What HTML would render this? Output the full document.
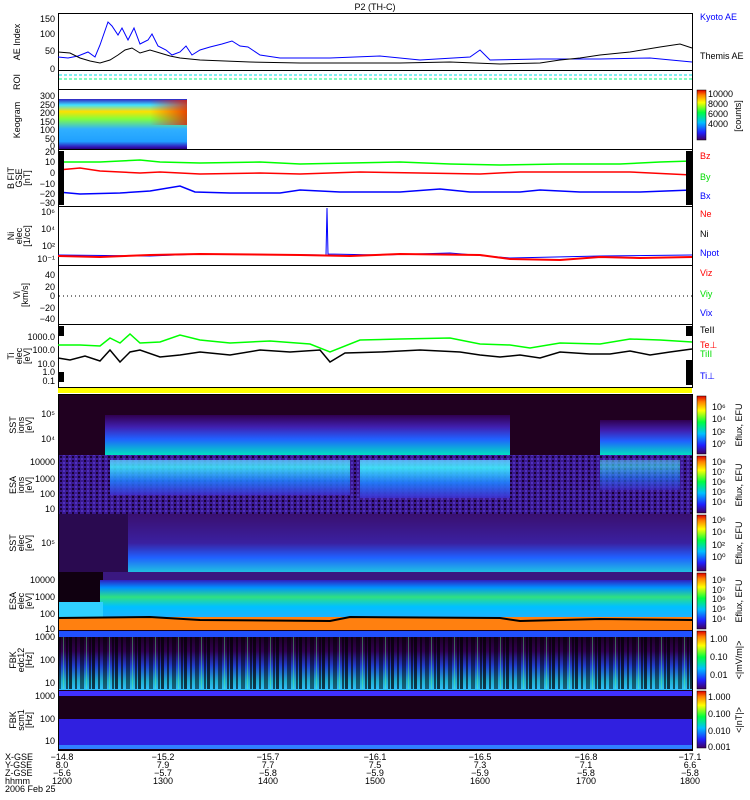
<!DOCTYPE html><html><head><style>body{margin:0;background:#fff}svg{display:block}text{font-family:"Liberation Sans",sans-serif;font-size:9px}</style></head><body>
<svg width="750" height="800" viewBox="0 0 750 800" xmlns="http://www.w3.org/2000/svg">
<defs>
<linearGradient id="cb" x1="0" y1="1" x2="0" y2="0"><stop offset="0" stop-color="#400060"/><stop offset=".15" stop-color="#2020ff"/><stop offset=".35" stop-color="#00c0ff"/><stop offset=".55" stop-color="#00ff40"/><stop offset=".75" stop-color="#ffff00"/><stop offset=".9" stop-color="#ff8000"/><stop offset="1" stop-color="#e00000"/></linearGradient>
<linearGradient id="keo" x1="0" y1="0" x2="0" y2="1"><stop offset="0" stop-color="#3020c0"/><stop offset=".12" stop-color="#40e0ff"/><stop offset=".25" stop-color="#ffe000"/><stop offset=".4" stop-color="#80ff40"/><stop offset=".6" stop-color="#30b0ff"/><stop offset=".85" stop-color="#20a0ff"/><stop offset=".95" stop-color="#3020c0"/><stop offset="1" stop-color="#2a0080"/></linearGradient>
<linearGradient id="keor" x1="0" y1="0" x2="1" y2="0"><stop offset="0" stop-color="#ff3000" stop-opacity="0"/><stop offset="1" stop-color="#e02000" stop-opacity=".8"/></linearGradient>
<linearGradient id="ssti" x1="0" y1="0" x2="0" y2="1"><stop offset="0" stop-color="#300050"/><stop offset=".3" stop-color="#4020b0"/><stop offset=".6" stop-color="#2060ff"/><stop offset="1" stop-color="#00e0c0"/></linearGradient>
<linearGradient id="esai" x1="0" y1="0" x2="0" y2="1"><stop offset="0" stop-color="#60c0ff"/><stop offset=".2" stop-color="#40f0ff"/><stop offset=".6" stop-color="#2080ff"/><stop offset="1" stop-color="#4030d0"/></linearGradient>
<linearGradient id="esae" x1="0" y1="0" x2="0" y2="1"><stop offset="0" stop-color="#3020c0"/><stop offset=".2" stop-color="#0090ff"/><stop offset=".45" stop-color="#30e080"/><stop offset=".7" stop-color="#00c0ff"/><stop offset="1" stop-color="#20b0ff"/></linearGradient>
<linearGradient id="ssteb" x1="0" y1="0" x2="0" y2="1"><stop offset="0" stop-color="#3a1070"/><stop offset=".5" stop-color="#3a20a0"/><stop offset=".75" stop-color="#2060ff"/><stop offset="1" stop-color="#20c0e0"/></linearGradient>
<linearGradient id="fbkg" x1="0" y1="0" x2="0" y2="1"><stop offset="0" stop-color="#150015"/><stop offset=".35" stop-color="#300050"/><stop offset=".6" stop-color="#2040d0"/><stop offset=".85" stop-color="#20b0d0"/><stop offset="1" stop-color="#30c0ff"/></linearGradient>
<pattern id="noise" width="6" height="4" patternUnits="userSpaceOnUse"><rect width="6" height="4" fill="#3a1a90"/><rect x="0" y="0" width="2" height="2" fill="#1a0030"/><rect x="3" y="2" width="2" height="2" fill="#5030c0"/></pattern>
<pattern id="fbk" width="23" height="52" patternUnits="userSpaceOnUse"><rect x="0" width="3" height="52" fill="#000" opacity=".7"/><rect x="6" width="2" height="52" fill="#000" opacity=".6"/><rect x="11" width="4" height="52" fill="#000" opacity=".5"/><rect x="17" width="1" height="52" fill="#60ff80" opacity=".4"/><rect x="20" width="2" height="52" fill="#000" opacity=".6"/></pattern>
</defs>
<text x="375" y="10" text-anchor="middle">P2 (TH-C)</text>
<rect x="58" y="395" width="634" height="60" fill="#200020"/>
<rect x="105" y="415" width="405" height="40" fill="url(#ssti)"/>
<rect x="600" y="420" width="92" height="35" fill="url(#ssti)"/>
<rect x="58" y="455" width="634" height="59" fill="url(#noise)"/>
<rect x="110" y="460" width="240" height="35" fill="url(#esai)" opacity=".85"/>
<rect x="360" y="460" width="150" height="38" fill="url(#esai)" opacity=".9"/>
<rect x="600" y="460" width="80" height="30" fill="url(#esai)" opacity=".6"/>
<rect x="58" y="514" width="634" height="58" fill="url(#ssteb)"/>
<rect x="58" y="514" width="70" height="58" fill="#2a0a50"/>
<rect x="58" y="572" width="634" height="58" fill="#3a1880"/>
<rect x="58" y="572" width="45" height="30" fill="#100010"/>
<rect x="100" y="580" width="592" height="38" fill="url(#esae)"/>
<rect x="58" y="602" width="45" height="16" fill="#30d0ff"/>
<rect x="58" y="617" width="634" height="13" fill="#ff8010"/>
<polyline points="58,618 150,617 200,620 330,621 350,617 500,618 520,621 600,619 692,620" fill="none" stroke="#000" stroke-width="2"/>
<rect x="58" y="630" width="634" height="60" fill="url(#fbkg)"/>
<rect x="58" y="637" width="634" height="52" fill="url(#fbk)"/>
<rect x="58" y="631" width="634" height="6" fill="#2050ff"/>
<rect x="58" y="690" width="634" height="60" fill="#1a0018"/>
<rect x="58" y="691" width="634" height="5" fill="#4030ff"/>
<rect x="58" y="719" width="634" height="30" fill="#3020e0"/>
<rect x="58" y="745" width="634" height="4" fill="#3080ff"/>
<rect x="58" y="99" width="129" height="50" fill="url(#keo)"/>
<rect x="150" y="100" width="37" height="25" fill="url(#keor)"/>
<rect x="58" y="388" width="634" height="5" fill="#ffff00"/>
<g fill="none" stroke="#000" stroke-width="1">
<rect x="58.5" y="13.5" width="634" height="57"/>
<rect x="58.5" y="70.5" width="634" height="19"/>
<rect x="58.5" y="89.5" width="634" height="60"/>
<rect x="58.5" y="149.5" width="634" height="57"/>
<rect x="58.5" y="206.5" width="634" height="59"/>
<rect x="58.5" y="265.5" width="634" height="59"/>
<rect x="58.5" y="324.5" width="634" height="63"/>
<rect x="58.5" y="394.5" width="634" height="356"/>
</g>
<line x1="59" y1="75" x2="692" y2="75" stroke="#00e0e0" stroke-dasharray="3,2"/>
<line x1="59" y1="79" x2="692" y2="79" stroke="#00ff80" stroke-dasharray="3,2"/>
<polyline fill="none" stroke="#0000ff" points="58,57 68,58 78,56 88,52 95,57 100,45 108,22 112,26 118,35 122,28 128,40 134,28 140,44 148,40 152,34 158,46 166,50 172,55 180,52 186,46 192,55 200,50 210,47 222,44 232,41 240,46 248,47 260,55 280,58 330,58 380,56 420,60 470,57 480,50 490,60 540,59 600,59 650,58 692,62"/>
<polyline fill="none" stroke="#000" points="58,52 70,53 80,58 90,61 100,63 110,60 118,55 125,50 132,48 140,53 150,50 160,53 170,56 180,58 200,60 250,62 300,63 350,63 400,63 450,62 500,64 540,63 560,60 580,58 600,55 630,52 660,47 680,44 692,48"/>
<polyline fill="none" stroke="#00ff00" stroke-width="1.5" points="58,162 100,162 140,160 160,162 200,163 260,162 300,164 350,163 400,162 450,164 500,165 560,164 620,164 660,162 692,161"/>
<polyline fill="none" stroke="#ff0000" stroke-width="1.5" points="58,170 80,168 100,171 140,173 160,172 200,174 260,173 300,174 360,172 420,173 480,174 520,172 580,172 630,172 692,175"/>
<polyline fill="none" stroke="#0000ff" stroke-width="1.5" points="58,192 80,194 120,193 150,191 180,186 195,192 230,193 280,193 300,190 340,192 400,192 440,189 470,192 520,192 540,190 580,192 640,192 692,190"/>
<polyline fill="none" stroke="#0000ff" points="58,255 150,256 200,254 326,255 327,208 328,254 380,255 450,253 510,258 600,256 692,255"/>
<polyline fill="none" stroke="#ff0000" stroke-width="2" points="58,256 100,257 150,255 200,254 300,255 350,256 400,254 480,255 510,259 560,260 600,257 640,258 692,257"/>
<line x1="59" y1="296" x2="692" y2="296" stroke="#000" stroke-dasharray="1,3"/>
<polyline fill="none" stroke="#00ff00" stroke-width="1.5" points="58,345 80,345 100,346 110,338 120,343 130,334 140,343 160,342 180,335 200,340 230,343 270,341 310,344 330,352 360,340 400,339 450,338 480,344 510,345 530,348 560,343 600,344 630,339 660,340 692,342"/>
<polyline fill="none" stroke="#000" stroke-width="1.5" points="58,358 70,360 85,356 100,361 110,350 120,362 130,352 140,350 160,357 180,355 200,352 230,355 260,350 290,352 320,350 330,362 345,353 380,352 420,350 460,352 480,355 500,357 520,355 540,358 560,352 590,354 610,354 630,351 650,355 670,352 692,349"/>
<g fill="#000"><rect x="58" y="151" width="6" height="54"/><rect x="58" y="326" width="6" height="10"/><rect x="58" y="372" width="6" height="10"/><rect x="686" y="151" width="6" height="54"/><rect x="686" y="326" width="6" height="10"/><rect x="686" y="360" width="6" height="25"/></g>
<g text-anchor="end">
<text x="55" y="22">150</text><text x="55" y="37">100</text><text x="55" y="54">50</text><text x="55" y="72">0</text>
<text x="55" y="99">300</text><text x="55" y="108">250</text><text x="55" y="116">200</text><text x="55" y="125">150</text><text x="55" y="133">100</text><text x="55" y="142">50</text><text x="55" y="149">0</text>
<text x="55" y="155">20</text><text x="55" y="165">10</text><text x="55" y="176">0</text><text x="55" y="187">−10</text><text x="55" y="197">−20</text><text x="55" y="206">−30</text>
<text x="55" y="215">10⁶</text><text x="55" y="232">10⁴</text><text x="55" y="249">10²</text><text x="55" y="262">10⁻¹</text>
<text x="55" y="278">40</text><text x="55" y="290">20</text><text x="55" y="299">0</text><text x="55" y="311">−20</text><text x="55" y="322">−40</text>
<text x="55" y="340">1000.0</text><text x="55" y="353">100.0</text><text x="55" y="367">10.0</text><text x="55" y="375">1.0</text><text x="55" y="384">0.1</text>
<text x="55" y="417">10⁵</text><text x="55" y="442">10⁴</text>
<text x="55" y="465">10000</text><text x="55" y="482">1000</text><text x="55" y="497">100</text><text x="55" y="512">10</text>
<text x="55" y="546">10⁵</text>
<text x="55" y="583">10000</text><text x="55" y="600">1000</text><text x="55" y="617">100</text><text x="55" y="632">10</text>
<text x="55" y="640">1000</text><text x="55" y="663">100</text><text x="55" y="686">10</text>
<text x="55" y="699">1000</text><text x="55" y="722">100</text><text x="55" y="744">10</text>
</g>
<g font-size="8">
<text transform="translate(20,42) rotate(-90)" text-anchor="middle">AE Index</text>
<text transform="translate(20,82) rotate(-90)" text-anchor="middle">ROI</text>
<text transform="translate(20,120) rotate(-90)" text-anchor="middle">Keogram</text>
<text transform="translate(14,178) rotate(-90)" text-anchor="middle">B FIT</text>
<text transform="translate(22,178) rotate(-90)" text-anchor="middle">GSE</text>
<text transform="translate(30,178) rotate(-90)" text-anchor="middle">[nT]</text>
<text transform="translate(14,236) rotate(-90)" text-anchor="middle">Ni</text>
<text transform="translate(22,236) rotate(-90)" text-anchor="middle">elec</text>
<text transform="translate(30,236) rotate(-90)" text-anchor="middle">[1/cc]</text>
<text transform="translate(20,295) rotate(-90)" text-anchor="middle">Vi</text>
<text transform="translate(28,295) rotate(-90)" text-anchor="middle">[km/s]</text>
<text transform="translate(14,356) rotate(-90)" text-anchor="middle">Ti</text>
<text transform="translate(22,356) rotate(-90)" text-anchor="middle">elec</text>
<text transform="translate(30,356) rotate(-90)" text-anchor="middle">[eV]</text>
<text transform="translate(16,425) rotate(-90)" text-anchor="middle">SST</text><text transform="translate(24,425) rotate(-90)" text-anchor="middle">ions</text><text transform="translate(32,425) rotate(-90)" text-anchor="middle">[eV]</text>
<text transform="translate(16,485) rotate(-90)" text-anchor="middle">ESA</text><text transform="translate(24,485) rotate(-90)" text-anchor="middle">ions</text><text transform="translate(32,485) rotate(-90)" text-anchor="middle">[eV]</text>
<text transform="translate(16,543) rotate(-90)" text-anchor="middle">SST</text><text transform="translate(24,543) rotate(-90)" text-anchor="middle">elec</text><text transform="translate(32,543) rotate(-90)" text-anchor="middle">[eV]</text>
<text transform="translate(16,601) rotate(-90)" text-anchor="middle">ESA</text><text transform="translate(24,601) rotate(-90)" text-anchor="middle">elec</text><text transform="translate(32,601) rotate(-90)" text-anchor="middle">[eV]</text>
<text transform="translate(16,660) rotate(-90)" text-anchor="middle">FBK</text><text transform="translate(24,660) rotate(-90)" text-anchor="middle">edc12</text><text transform="translate(32,660) rotate(-90)" text-anchor="middle">[Hz]</text>
<text transform="translate(16,720) rotate(-90)" text-anchor="middle">FBK</text><text transform="translate(24,720) rotate(-90)" text-anchor="middle">scm1</text><text transform="translate(32,720) rotate(-90)" text-anchor="middle">[Hz]</text>
</g>
<g font-size="8">
<text x="700" y="20" fill="#0000ff">Kyoto AE</text><text x="700" y="59">Themis AE</text>
<text x="700" y="159" fill="#ff0000">Bz</text><text x="700" y="180" fill="#00dd00">By</text><text x="700" y="199" fill="#0000ff">Bx</text>
<text x="700" y="217" fill="#ff0000">Ne</text><text x="700" y="237">Ni</text><text x="700" y="256" fill="#0000ff">Npot</text>
<text x="700" y="276" fill="#ff0000">Viz</text><text x="700" y="297" fill="#00dd00">Viy</text><text x="700" y="316" fill="#0000ff">Vix</text>
<text x="700" y="333">TeII</text><text x="700" y="348" fill="#ff0000">Te⊥</text><text x="700" y="357" fill="#00dd00">TiII</text><text x="700" y="379" fill="#0000ff">Ti⊥</text>
</g>
<g stroke="#000" stroke-width=".5">
<rect x="697" y="90" width="9" height="50" fill="url(#cb)"/>
<rect x="697" y="396" width="9" height="58" fill="url(#cb)"/>
<rect x="697" y="456" width="9" height="57" fill="url(#cb)"/>
<rect x="697" y="515" width="9" height="56" fill="url(#cb)"/>
<rect x="697" y="573" width="9" height="56" fill="url(#cb)"/>
<rect x="697" y="631" width="9" height="58" fill="url(#cb)"/>
<rect x="697" y="691" width="9" height="57" fill="url(#cb)"/>
</g>
<g font-size="7">
<text x="708" y="97">10000</text><text x="708" y="107">8000</text><text x="708" y="117">6000</text><text x="708" y="127">4000</text>
<text transform="translate(741,116) rotate(-90)" text-anchor="middle">[counts]</text>
<text x="712" y="410">10⁶</text><text x="712" y="422">10⁴</text><text x="712" y="435">10²</text><text x="712" y="447">10⁰</text>
<text x="712" y="465">10⁸</text><text x="712" y="475">10⁷</text><text x="712" y="485">10⁶</text><text x="712" y="495">10⁵</text><text x="712" y="505">10⁴</text>
<text x="712" y="523">10⁶</text><text x="712" y="535">10⁴</text><text x="712" y="548">10²</text><text x="712" y="560">10⁰</text>
<text x="712" y="583">10⁸</text><text x="712" y="593">10⁷</text><text x="712" y="602">10⁶</text><text x="712" y="612">10⁵</text><text x="712" y="622">10⁴</text>
<text x="710" y="642">1.00</text><text x="710" y="660">0.10</text><text x="710" y="678">0.01</text>
<text x="708" y="700">1.000</text><text x="708" y="717">0.100</text><text x="708" y="734">0.010</text><text x="708" y="750">0.001</text>
<text transform="translate(742,425) rotate(-90)" text-anchor="middle">Eflux, EFU</text>
<text transform="translate(742,485) rotate(-90)" text-anchor="middle">Eflux, EFU</text>
<text transform="translate(742,543) rotate(-90)" text-anchor="middle">Eflux, EFU</text>
<text transform="translate(742,601) rotate(-90)" text-anchor="middle">Eflux, EFU</text>
<text transform="translate(742,660) rotate(-90)" text-anchor="middle">&lt;|mV/m|&gt;</text>
<text transform="translate(742,720) rotate(-90)" text-anchor="middle">&lt;|nT|&gt;</text>
</g>
<g font-size="8" text-anchor="middle">
<text x="62" y="760">−14.8</text><text x="62" y="768">8.0</text><text x="62" y="776">−5.6</text><text x="62" y="784">1200</text>
<text x="163" y="760">−15.2</text><text x="163" y="768">7.9</text><text x="163" y="776">−5.7</text><text x="163" y="784">1300</text>
<text x="268" y="760">−15.7</text><text x="268" y="768">7.7</text><text x="268" y="776">−5.8</text><text x="268" y="784">1400</text>
<text x="375" y="760">−16.1</text><text x="375" y="768">7.5</text><text x="375" y="776">−5.9</text><text x="375" y="784">1500</text>
<text x="480" y="760">−16.5</text><text x="480" y="768">7.3</text><text x="480" y="776">−5.9</text><text x="480" y="784">1600</text>
<text x="586" y="760">−16.8</text><text x="586" y="768">7.1</text><text x="586" y="776">−5.8</text><text x="586" y="784">1700</text>
<text x="690" y="760">−17.1</text><text x="690" y="768">6.6</text><text x="690" y="776">−5.8</text><text x="690" y="784">1800</text>
</g>
<g font-size="8"><text x="5" y="760">X-GSE</text><text x="5" y="768">Y-GSE</text><text x="5" y="776">Z-GSE</text><text x="5" y="784">hhmm</text><text x="5" y="792">2006 Feb 25</text></g>
</svg>
</body></html>
